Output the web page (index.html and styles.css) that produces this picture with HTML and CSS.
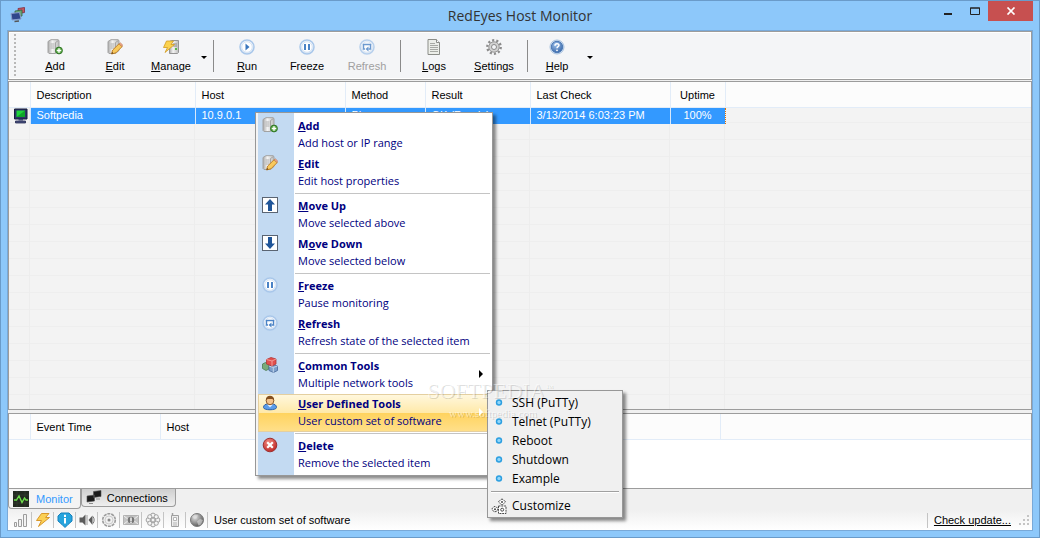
FILE: index.html
```html
<!DOCTYPE html>
<html lang="en">
<head>
    <meta charset="UTF-8">
    <meta name="viewport" content="width=device-width, initial-scale=1.0">
    <title>RedEyes Host Monitor</title>
    <link rel="stylesheet" href="styles.css">
</head>
<body>

<!-- Icon set -->
<svg class="sprite" aria-hidden="true">
    <defs>
        <linearGradient id="g-server" x1="0" x2="1"><stop offset="0" stop-color="#a8a8a8"/><stop offset=".4" stop-color="#f4f4f4"/><stop offset="1" stop-color="#bcbcbc"/></linearGradient>
        <linearGradient id="g-ring" x1="0" x2="0" y1="0" y2="1"><stop offset="0" stop-color="#ffffff"/><stop offset="1" stop-color="#dbe8f6"/></linearGradient>
        <radialGradient id="g-help" cx=".4" cy=".3" r=".8"><stop offset="0" stop-color="#9cc0ea"/><stop offset="1" stop-color="#2f5fa3"/></radialGradient>
        <radialGradient id="g-del" cx=".4" cy=".3" r=".8"><stop offset="0" stop-color="#f08a80"/><stop offset="1" stop-color="#b81c1c"/></radialGradient>
        <radialGradient id="g-globe" cx=".35" cy=".3" r=".8"><stop offset="0" stop-color="#e0e0e0"/><stop offset="1" stop-color="#4c4c4c"/></radialGradient>
    </defs>
    <symbol id="i-server" viewBox="0 0 16 16">
        <path d="M1 2.500L4 .7h7l1 .8v10L8.500 14.500H2L1 13.500z" fill="url(#g-server)" stroke="#a2a2a2"/>
        <path d="M8.500 14V3.500l3-2" fill="none" stroke="#a6a6a6"/>
        <path d="M3.500 5h4M3.500 7h4M3.500 9h4" stroke="#b0b0b0"/>
    </symbol>
    <symbol id="i-add" viewBox="0 0 16 16">
        <use href="#i-server"/>
        <circle cx="12" cy="11.500" r="3.400" fill="#5fae4a" stroke="#2f7326"/>
        <path d="M12 9.300v4.400M9.800 11.500h4.400" stroke="#fff" stroke-width="1.400"/>
    </symbol>
    <symbol id="i-edit" viewBox="0 0 16 16">
        <use href="#i-server"/>
        <path d="M4.500 15l1.200-4L12 4.800 15.200 7.500 9 13.800z" fill="#f8c95c" stroke="#c0812a"/>
        <path d="M12 4.800l1.300-1 2.200 2-.5 1.700z" fill="#f3a88c" stroke="#b97a52" stroke-width=".6"/>
        <path d="M4.500 15l.6-2 1.400 1.300z" fill="#5b3d1c"/>
    </symbol>
    <symbol id="i-manage" viewBox="0 0 16 16">
        <path d="M6.500 2.500l2-1h7v12l-1 1h-8z" fill="url(#g-server)" stroke="#949494"/>
        <path d="M10 5h4M10 7h4" stroke="#888"/><rect x="12" y="9" width="2" height="2" fill="#58b84a"/>
        <path d="M3.500 2h7L8 5.500h3.500L2 13.500l2.500-5H.5z" fill="#fbd24e" stroke="#d09a22" stroke-width=".8"/>
    </symbol>
    <symbol id="i-ring" viewBox="0 0 16 16">
        <circle cx="8" cy="8" r="7" fill="url(#g-ring)" stroke="#a9c7ea" stroke-width="1.500"/>
        <circle cx="8" cy="8" r="5.300" fill="#fff" stroke="#d4e2f3"/>
    </symbol>
    <symbol id="i-run" viewBox="0 0 16 16"><use href="#i-ring"/><path d="M6.500 4.500L10.500 8l-4 3.500z" fill="#3a76bd"/></symbol>
    <symbol id="i-freeze" viewBox="0 0 16 16"><use href="#i-ring"/><path d="M6 5v6M10 5v6" stroke="#4b83c6" stroke-width="2"/></symbol>
    <symbol id="i-refresh" viewBox="0 0 16 16">
        <use href="#i-ring"/>
        <path d="M6 10H4.500V5.500h7V10H9.500" fill="none" stroke="#4b83c6" stroke-width="1.400"/>
        <path d="M9.500 7.500v5L6.500 10z" fill="#4b83c6"/>
    </symbol>
    <symbol id="i-logs" viewBox="0 0 16 16">
        <path d="M2 .5h8.500l3 3v12H2z" fill="#eceee9" stroke="#8b8d88"/>
        <path d="M10.500.5v3h3" fill="#fff" stroke="#8b8d88"/>
        <path d="M4 4.500h5M4 6.500h8M4 8.500h8M4 10.500h8M4 12.500h8" stroke="#a7a9a4"/>
    </symbol>
    <symbol id="i-gear" viewBox="0 0 16 16">
        <circle cx="8" cy="8" r="6.700" fill="none" stroke="#8c8c8c" stroke-width="2.400" stroke-dasharray="2.105 2.105"/>
        <circle cx="8" cy="8" r="5.200" fill="#d2d2d2" stroke="#979797"/>
        <circle cx="8" cy="8" r="2.500" fill="#f4f5f7" stroke="#8a8a8a"/>
    </symbol>
    <symbol id="i-help" viewBox="0 0 16 16">
        <circle cx="8" cy="8" r="7" fill="#dfeaf6" stroke="#a4bfde"/>
        <circle cx="8" cy="8" r="5.700" fill="url(#g-help)" stroke="#4a78b5"/>
        <path d="M6 6.700c0-2.600 4-2.500 4-.4 0 1.400-2 1.300-2 2.900" fill="none" stroke="#fff" stroke-width="1.500"/>
        <circle cx="8" cy="11.300" r=".9" fill="#fff"/>
    </symbol>
    <symbol id="i-up" viewBox="0 0 16 16">
        <rect x=".5" y=".5" width="15" height="15" fill="#fff" stroke="#5a6472"/>
        <path d="M8 2l5 5.500h-3V14H6V7.500H3z" fill="#1f5599"/>
    </symbol>
    <symbol id="i-down" viewBox="0 0 16 16">
        <rect x=".5" y=".5" width="15" height="15" fill="#fff" stroke="#5a6472"/>
        <path d="M8 14l5-5.500h-3V2H6v6.500H3z" fill="#1f5599"/>
    </symbol>
    <symbol id="i-tools" viewBox="0 0 16 16">
        <path d="M.5 7l3-1.500L7 7v5l-3 1.500-3.500-2z" fill="#79ab7b" stroke="#4b7a52" stroke-width=".8"/>
        <path d="M7 9l4-1.500L15.500 9v4.500l-4 2L7 13.500z" fill="#7ea0cb" stroke="#47689a" stroke-width=".8"/>
        <path d="M7 9l4.300 1.500L15.500 9M11.300 10.500v5" fill="none" stroke="#c3d5ec"/>
        <path d="M4.500 2.500L9 .5l5 1.500v5l-4 2-5.500-2z" fill="#e2504e" stroke="#b23636" stroke-width=".8"/>
        <path d="M4.500 2.500L10 4l4-2M10 4v5" fill="none" stroke="#f49a96"/>
    </symbol>
    <symbol id="i-user" viewBox="0 0 16 16">
        <path d="M1.500 12.500c0-2.500 2-3.500 4.500-3.500h4c2.500 0 4.500 1 4.500 3.500 0 3-13 3-13 0z" fill="#5b9cea" stroke="#2d62a8"/>
        <path d="M5 9.500l3 3 3-3z" fill="#dcebfc"/>
        <ellipse cx="8" cy="5.700" rx="3.800" ry="4" fill="#f6c48c" stroke="#8c5a2a"/>
        <path d="M3.800 5.500C3.500-.8 12.500-.8 12.200 5.500L10.500 4h-5z" fill="#85501f"/>
    </symbol>
    <symbol id="i-delete" viewBox="0 0 16 16">
        <circle cx="8" cy="8" r="6.800" fill="url(#g-del)" stroke="#9d3030"/>
        <path d="M5.200 5.200l5.600 5.600M10.800 5.200l-5.600 5.600" stroke="#fff" stroke-width="2.200"/>
    </symbol>
    <symbol id="i-dot" viewBox="0 0 16 16"><circle cx="8" cy="7.500" r="3.200" fill="#2d9fe0"/><circle cx="8" cy="7.500" r="1.700" fill="#8fd6fa"/></symbol>
    <symbol id="i-puzzle" viewBox="0 0 16 16">
        <g fill="#fff" stroke="#4a4a4a" stroke-dasharray="2 .8">
            <path d="M11 .8l1.500 1.400 2 1.300-1.500 2-2 1.500-2-1.500-1.500-2 2-1.300z"/>
            <path d="M.8 11L3 8.500 5.500 9 7 11l-1.500 2.500-2.500.3z"/>
            <path d="M7.500 8h7.500v7.500H7.500z"/>
        </g>
        <circle cx="11.200" cy="11.700" r="1.500" fill="none" stroke="#4a4a4a"/><circle cx="11" cy="4" r="1" fill="#4a4a4a"/><circle cx="4" cy="11.200" r="1" fill="#4a4a4a"/>
    </symbol>
    <symbol id="i-app" viewBox="0 0 16 16">
        <path d="M8 1.500L14.500.5v5l-6 1z" fill="#c55563" stroke="#7d2f3c" stroke-width=".8"/>
        <path d="M5 4l7-1v6L5 10z" fill="#6aa876" stroke="#365f42" stroke-width=".8"/>
        <path d="M1 6.500l8.500-1L11 12l-9 1z" fill="#30468c" stroke="#8a9bc9"/>
        <path d="M4.500 14.500L9 14" stroke="#555" stroke-width="1.500"/>
    </symbol>
    <symbol id="i-host" viewBox="0 0 16 16">
        <path d="M1.500 1h12.500v10H1.500z" fill="#2c3566" stroke="#171d3d"/>
        <path d="M3.500 2.500h8.500v6.500H3.500z" fill="#1fd43a"/>
        <path d="M3.500 9l8.500-6.500V9z" fill="#0da529"/>
        <path d="M5.500 11h4.500v1.500H5.500z" fill="#3c4575"/><path d="M2.500 13h10v2h-10z" fill="#4a5280" stroke="#232a50" stroke-width=".8"/>
    </symbol>
    <symbol id="i-pulse" viewBox="0 0 16 16">
        <rect width="16" height="16" fill="#232a20"/>
        <path d="M0 4h16M0 12h16M4 0v16M12 0v16" stroke="#364034" stroke-width=".6"/>
        <path d="M1 9h2.500L6 5l3 6.500L11.500 7l1.500 2h2" fill="none" stroke="#6fe04c" stroke-width="1.400"/>
    </symbol>
    <symbol id="i-screens" viewBox="0 0 16 16">
        <path d="M7.500 1.500l7.500-1v6l-7.500 1zM1 6l7.500-1v6L1 12z" fill="#1b1b1b" stroke="#555" stroke-width=".6"/>
        <path d="M3 13.500h4M10 9h4" stroke="#8e8e8e"/>
    </symbol>
    <symbol id="i-bars" viewBox="0 0 16 16"><path d="M1.500 10.500h2v4h-2zM5.500 7.500h3v7h-3zM10.500 2.500h3v12h-3z" fill="#f2f2f2" stroke="#9c9c9c"/></symbol>
    <symbol id="i-bolt" viewBox="0 0 16 16"><path d="M6.500 1.500H14l-3.500 4h4L3.500 14.500l3-6H1.500z" fill="#fbd054" stroke="#d8972a"/></symbol>
    <symbol id="i-info" viewBox="0 0 16 16">
        <path d="M4 1h8l3 3v5l-4 3.500-3 3-3-3L1 9V4z" fill="#27a4dd" stroke="#1681bd"/>
        <path d="M8 6v5.500M8 2.800V5" stroke="#fff" stroke-width="2"/>
    </symbol>
    <symbol id="i-sound" viewBox="0 0 16 16">
        <path d="M.5 5.500h3l3-3v11l-3-3h-3z" fill="#5b5b5b"/><path d="M8 3v10" stroke="#9a9a9a"/>
        <path d="M9.500 8l4-4.500V13z" fill="#5b5b5b"/><path d="M14 4.500c1.500 2 1.500 5 0 7" fill="none" stroke="#777"/>
    </symbol>
    <symbol id="i-cog" viewBox="0 0 16 16">
        <circle cx="8" cy="8" r="6.300" fill="#f0f0f0" stroke="#9c9c9c" stroke-width="1.600" stroke-dasharray="3 .9"/>
        <circle cx="8" cy="8" r="4" fill="none" stroke="#cdcdcd"/><circle cx="8" cy="8" r="1.500" fill="#8a8a8a"/>
    </symbol>
    <symbol id="i-mail" viewBox="0 0 16 16">
        <path d="M.5 3.500h15v9H.5z" fill="#c4c4c4" stroke="#b2b2b2"/><path d="M1 4l5 4-5 4M15 4l-5 4 5 4" fill="none" stroke="#efefef"/>
        <circle cx="8" cy="8" r="3.300" fill="#777"/><path d="M8 5.500V9M8 9.600V11" stroke="#fff" stroke-width="1.400"/>
    </symbol>
    <symbol id="i-flower" viewBox="0 0 16 16">
        <g fill="#f4f4f4" stroke="#a0a0a0">
            <circle cx="8" cy="3.500" r="2.400"/><circle cx="8" cy="12.500" r="2.400"/><circle cx="3.500" cy="8" r="2.400"/><circle cx="12.500" cy="8" r="2.400"/>
            <circle cx="4.800" cy="4.800" r="2.100"/><circle cx="11.200" cy="4.800" r="2.100"/><circle cx="4.800" cy="11.200" r="2.100"/><circle cx="11.200" cy="11.200" r="2.100"/>
            <circle cx="8" cy="8" r="2"/>
        </g>
    </symbol>
    <symbol id="i-phone" viewBox="0 0 16 16">
        <path d="M4.500 3.500h7v11h-7z" fill="#eee" stroke="#a0a0a0"/><path d="M5.500 1v2.500" stroke="#a0a0a0" stroke-width="1.500"/>
        <path d="M6.500 5.500h3v3h-3z" fill="#fff" stroke="#b5b5b5"/><path d="M6 11h4M6 13h4" stroke="#b5b5b5"/>
    </symbol>
    <symbol id="i-globe" viewBox="0 0 16 16">
        <circle cx="8" cy="8" r="6.500" fill="url(#g-globe)" stroke="#7b7b7b"/>
        <path d="M3 4.500l3-2 3 1-1.500 3-2.500.5zM8 9.500l3-2.500 3 1-2 4.500-2.500 1z" fill="#e4e4e4" opacity=".55"/>
    </symbol>
</svg>

<div class="window">
    <!-- Title bar -->
    <header class="titlebar">
        <svg class="icon app-icon"><use href="#i-app"/></svg>
        <h1>RedEyes Host Monitor</h1>
        <div class="window-buttons">
            <button type="button" aria-label="Minimize"><svg viewBox="0 0 10 8"><path d="M1 7h8" stroke="#222" stroke-width="2"/></svg></button>
            <button type="button" aria-label="Maximize"><svg viewBox="0 0 10 8"><path d="M.5 1h9v6.500h-9zM0 1h10" fill="none" stroke="#222"/></svg></button>
            <button type="button" class="close" aria-label="Close"><svg viewBox="0 0 10 8"><path d="M1.500.5l7 7M8.500.5l-7 7" stroke="#fff" stroke-width="1.700"/></svg></button>
        </div>
    </header>

    <div class="client">
        <!-- Toolbar -->
        <div class="toolbar">
            <span class="grip"></span>
            <button type="button" class="tool"><svg class="icon"><use href="#i-add"/></svg><span><u>A</u>dd</span></button>
            <button type="button" class="tool"><svg class="icon"><use href="#i-edit"/></svg><span><u>E</u>dit</span></button>
            <button type="button" class="tool narrow"><svg class="icon"><use href="#i-manage"/></svg><span><u>M</u>anage</span></button>
            <button type="button" class="caret" aria-label="Manage menu"></button>
            <span class="divider"></span>
            <button type="button" class="tool"><svg class="icon"><use href="#i-run"/></svg><span><u>R</u>un</span></button>
            <button type="button" class="tool"><svg class="icon"><use href="#i-freeze"/></svg><span>Freeze</span></button>
            <button type="button" class="tool" disabled><svg class="icon"><use href="#i-refresh"/></svg><span>Refresh</span></button>
            <span class="divider"></span>
            <button type="button" class="tool"><svg class="icon"><use href="#i-logs"/></svg><span><u>L</u>ogs</span></button>
            <button type="button" class="tool"><svg class="icon"><use href="#i-gear"/></svg><span><u>S</u>ettings</span></button>
            <span class="divider"></span>
            <button type="button" class="tool narrow"><svg class="icon"><use href="#i-help"/></svg><span><u>H</u>elp</span></button>
            <button type="button" class="caret" aria-label="Help menu"></button>
        </div>

        <!-- Monitored hosts -->
        <div class="pane hosts">
            <table>
                <colgroup>
                    <col class="c-icon"><col class="c-desc"><col class="c-host"><col class="c-method"><col class="c-result"><col class="c-check"><col class="c-uptime"><col>
                </colgroup>
                <thead>
                    <tr><th></th><th>Description</th><th>Host</th><th>Method</th><th>Result</th><th>Last Check</th><th class="center">Uptime</th><th class="rest"></th></tr>
                </thead>
                <tbody>
                    <tr class="selected"><td><svg class="icon"><use href="#i-host"/></svg></td><td>Softpedia</td><td>10.9.0.1</td><td>Ping</td><td>OK (Ready)</td><td>3/13/2014 6:03:23 PM</td><td class="center">100%</td><td class="rest"></td></tr>
                </tbody>
            </table>
        </div>

        <!-- Events of the selected host -->
        <div class="pane events">
            <table>
                <colgroup>
                    <col class="c-icon"><col class="c-time"><col class="c-event-host"><col>
                </colgroup>
                <thead>
                    <tr><th></th><th>Event Time</th><th>Host</th><th class="rest"></th></tr>
                </thead>
            </table>
        </div>

        <div class="tabs">
            <button type="button" class="tab active"><svg class="icon"><use href="#i-pulse"/></svg>Monitor</button>
            <button type="button" class="tab"><svg class="icon"><use href="#i-screens"/></svg>Connections</button>
        </div>

        <footer class="statusbar">
            <span class="cell"><svg class="icon"><use href="#i-bars"/></svg></span>
            <span class="cell"><svg class="icon"><use href="#i-bolt"/></svg></span>
            <span class="cell"><svg class="icon"><use href="#i-info"/></svg></span>
            <span class="cell"><svg class="icon"><use href="#i-sound"/></svg></span>
            <span class="cell"><svg class="icon"><use href="#i-cog"/></svg></span>
            <span class="cell"><svg class="icon"><use href="#i-mail"/></svg></span>
            <span class="cell"><svg class="icon"><use href="#i-flower"/></svg></span>
            <span class="cell"><svg class="icon"><use href="#i-phone"/></svg></span>
            <span class="cell"><svg class="icon"><use href="#i-globe"/></svg></span>
            <span class="hint">User custom set of software</span>
            <a class="update" href="#">Check update...</a>
            <svg class="resize" viewBox="0 0 11 11"><path d="M8 1h2M4 5h2M8 5h2M0 9h2M4 9h2M8 9h2" stroke="#c4c4c4" stroke-width="2"/></svg>
        </footer>
    </div>
</div>

<!-- Context menu -->
<div class="menu">
    <button type="button" class="item"><svg class="icon"><use href="#i-add"/></svg><b><u>A</u>dd</b><span>Add host or IP range</span></button>
    <button type="button" class="item"><svg class="icon"><use href="#i-edit"/></svg><b><u>E</u>dit</b><span>Edit host properties</span></button>
    <div class="line"></div>
    <button type="button" class="item"><svg class="icon"><use href="#i-up"/></svg><b><u>M</u>ove Up</b><span>Move selected above</span></button>
    <button type="button" class="item"><svg class="icon"><use href="#i-down"/></svg><b>M<u>o</u>ve Down</b><span>Move selected below</span></button>
    <div class="line"></div>
    <button type="button" class="item"><svg class="icon"><use href="#i-freeze"/></svg><b><u>F</u>reeze</b><span>Pause monitoring</span></button>
    <button type="button" class="item"><svg class="icon"><use href="#i-refresh"/></svg><b><u>R</u>efresh</b><span>Refresh state of the selected item</span></button>
    <div class="line"></div>
    <button type="button" class="item parent"><svg class="icon"><use href="#i-tools"/></svg><b><u>C</u>ommon Tools</b><span>Multiple network tools</span></button>
    <button type="button" class="item parent hot"><svg class="icon"><use href="#i-user"/></svg><b><u>U</u>ser Defined Tools</b><span>User custom set of software</span></button>
    <div class="line"></div>
    <button type="button" class="item"><svg class="icon"><use href="#i-delete"/></svg><b><u>D</u>elete</b><span>Remove the selected item</span></button>

    <div class="submenu">
        <button type="button"><svg class="icon"><use href="#i-dot"/></svg>SSH (PuTTy)</button>
        <button type="button"><svg class="icon"><use href="#i-dot"/></svg>Telnet (PuTTy)</button>
        <button type="button"><svg class="icon"><use href="#i-dot"/></svg>Reboot</button>
        <button type="button"><svg class="icon"><use href="#i-dot"/></svg>Shutdown</button>
        <button type="button"><svg class="icon"><use href="#i-dot"/></svg>Example</button>
        <hr>
        <button type="button"><svg class="icon"><use href="#i-puzzle"/></svg>Customize</button>
    </div>
</div>

<!-- Watermark -->
<div class="watermark">
    <div>SOFTPEDIA<sup>™</sup></div>
    <small>www.softpedia.com</small>
</div>

</body>
</html>
```
FILE: styles.css
```css
* {
    box-sizing: border-box;
}

body {
    margin: 0;
    font-family: "Liberation Sans", Arial, sans-serif;
    font-size: 11px;
    color: #000;
}

button {
    margin: 0;
    padding: 0;
    border: none;
    background: none;
    font: inherit;
    color: inherit;
}

.sprite {
    position: absolute;
    width: 0;
    height: 0;
}

.icon {
    width: 16px;
    height: 16px;
    flex: none;
}

/* Window frame */
.window {
    min-height: 100vh;
    display: flex;
    flex-direction: column;
    padding: 0 6px 6px;
    border: 1px solid #6a9bc9;
    background-color: #8dc8fa;
}

.titlebar {
    display: flex;
    height: 29px;
}

.app-icon {
    margin: 6px 0 0 3px;
}

.titlebar h1 {
    flex: 1;
    margin: 0;
    padding-left: 80px;
    font-family: "Open Sans", "Noto Sans", sans-serif;
    font-size: 14px;
    font-weight: normal;
    line-height: 29px;
    text-align: center;
    color: #333;
}

.window-buttons {
    display: flex;
    height: 20px;
}

.window-buttons button {
    width: 27px;
    line-height: 0;
}

.window-buttons svg {
    width: 10px;
    height: 8px;
}

.window-buttons .close {
    width: 45px;
    background-color: #c75050;
}

.client {
    flex: 1;
    display: flex;
    flex-direction: column;
    border: 1px solid #79a9d8;
    background-color: #f0f0f0;
}

/* Toolbar */
.toolbar {
    display: flex;
    align-items: center;
    height: 49px;
    padding-left: 5px;
    border: 1px solid #9c9c9c;
    box-shadow: inset 0 0 0 1px #fff;
    background-color: #f4f5f7;
}

.grip {
    width: 2px;
    height: 43px;
    margin-right: 9px;
    background: repeating-linear-gradient(#b8b8b8 0 2px, transparent 2px 4px);
}

.tool {
    display: flex;
    flex-direction: column;
    align-items: center;
    gap: 4px;
    width: 60px;
    line-height: 14px;
}

.tool.narrow {
    width: 52px;
}

.tool:disabled {
    color: #a0a0a0;
}

.tool:disabled .icon {
    opacity: 0.8;
}

.caret {
    width: 13px;
    height: 40px;
}

.caret::before {
    content: "";
    display: block;
    width: 0;
    margin: 4px auto 0;
    border: 3px solid transparent;
    border-top-color: #000;
    border-bottom: none;
}

.divider {
    width: 1px;
    height: 32px;
    margin: 0 3px;
    background-color: #8a8a8a;
}

/* Lists */
.pane {
    border: 1px solid #9c9c9c;
    background-color: #fff;
}

.hosts {
    flex: 1;
    margin-top: 1px;
    background:
        linear-gradient(#ededed, #ededed) 20px 0 / 1px 100% no-repeat,
        linear-gradient(#ededed, #ededed) 185px 0 / 1px 100% no-repeat,
        linear-gradient(#ededed, #ededed) 335px 0 / 1px 100% no-repeat,
        linear-gradient(#ededed, #ededed) 520px 0 / 1px 100% no-repeat,
        linear-gradient(#ededed, #ededed) 660px 0 / 1px 100% no-repeat,
        linear-gradient(#ededed, #ededed) 715px 0 / 1px 100% no-repeat,
        repeating-linear-gradient(#f3f3f3 0 16px, #eeeeee 16px 17px) 0 7px;
}

.events {
    height: 76px;
    margin-top: 3px;
}

.pane table {
    width: 100%;
    table-layout: fixed;
    border-collapse: collapse;
}

.pane th,
.pane td {
    padding: 0 6px;
    text-align: left;
    font-weight: normal;
    white-space: nowrap;
}

.pane th {
    height: 25px;
    padding-top: 2px;
    border-right: 1px solid #e2ecf8;
    border-bottom: 1px solid #e2ecf8;
    background-color: #fcfcfc;
}

.pane th.rest {
    border-right: none;
}

.pane td {
    height: 17px;
    line-height: 15px;
}

.pane .center {
    padding-left: 0;
    padding-right: 0;
    text-align: center;
}

.selected td {
    border-right: 1px solid #d8e8fa;
    border-top: 1px dotted #c07040;
    background-color: #3399ff;
    color: #fff;
}

.selected td:first-child {
    padding: 0 4px;
    border-top: none;
    background: none;
}

.selected td.center {
    border-right: 1px dotted #e07000;
}

.selected td.rest {
    border: none;
    background: none;
}

.selected .icon {
    display: block;
}

.c-icon { width: 21px; }
.c-desc { width: 165px; }
.c-host { width: 150px; }
.c-method { width: 80px; }
.c-result { width: 105px; }
.c-check { width: 140px; }
.c-uptime { width: 55px; }
.c-time { width: 130px; }
.c-event-host { width: 560px; }

/* Tabs */
.tabs {
    display: flex;
    align-items: flex-start;
    height: 21px;
}

.tab {
    display: flex;
    align-items: center;
    gap: 5px;
    height: 18px;
    padding: 0 7px 0 4px;
    border: 1px solid #9c9c9c;
    border-top: none;
    border-radius: 0 0 4px 4px;
    background: linear-gradient(#cfcfcf, #efefef);
}

.tab.active {
    gap: 7px;
    height: 20px;
    background: #f4f4f4;
    color: #3399ff;
}

/* Status bar */
.statusbar {
    display: flex;
    align-items: center;
    height: 20px;
    padding: 0 2px;
    background: linear-gradient(#f0f0f0, #fff);
}

.cell {
    display: flex;
    justify-content: center;
    width: 22px;
    height: 16px;
    border-right: 1px solid #c4c4c4;
}

.hint {
    flex: 1;
    padding-left: 6px;
}

.update {
    padding: 1px 8px 2px 6px;
    border-left: 1px solid #c4c4c4;
    color: #000;
    text-decoration: underline;
}

.resize {
    width: 11px;
    height: 11px;
}

/* Context menu */
.menu {
    position: absolute;
    left: 255px;
    top: 112px;
    width: 238px;
    padding: 3px 2px 1px;
    border: 1px solid #979797;
    background: linear-gradient(to right, #f4f4f4 2px, #c3daf2 2px 38px, #fff 38px);
    box-shadow: 3px 3px 3px rgba(0, 0, 0, 0.45);
    font-family: "Open Sans", "Noto Sans", sans-serif;
    font-size: 11px;
    line-height: 17px;
    color: #000080;
}

.item {
    position: relative;
    display: grid;
    grid-template-columns: 36px 1fr;
    grid-template-rows: 17px 17px;
    align-content: start;
    column-gap: 4px;
    width: 100%;
    height: 38px;
    padding-top: 1px;
    text-align: left;
    white-space: nowrap;
}

.item .icon {
    grid-row: 1 / 3;
    margin-left: 4px;
}

.item.hot {
    background: linear-gradient(#fff8e0, #ffe9a8 50%, #ffd35e 50%, #ffe08c);
    box-shadow: inset 0 0 0 1px #e4cfa0;
}

.item.parent::after {
    content: "";
    position: absolute;
    right: 7px;
    top: 14px;
    border: 4px solid transparent;
    border-left-color: #000;
    border-right: none;
}

.item.hot::after {
    border-left-color: #fff;
}

.line {
    height: 3px;
    margin: 1px 0 0 37px;
    border-top: 1px solid #c4c4c4;
}

/* Submenu */
.submenu {
    position: absolute;
    left: 231px;
    top: 277px;
    width: 136px;
    padding: 2px 3px;
    border: 1px solid #979797;
    background-color: #f0f0f0;
    box-shadow: 3px 3px 3px rgba(0, 0, 0, 0.45);
    font-size: 12px;
    color: #000;
}

.submenu button {
    display: flex;
    align-items: center;
    gap: 5px;
    width: 100%;
    height: 19px;
    white-space: nowrap;
}

.submenu hr {
    margin: 3px 0;
    border: none;
    border-top: 1px solid #a0a0a0;
    border-bottom: 1px solid #fff;
}

/* Watermark */
.watermark {
    position: absolute;
    left: 427px;
    top: 380px;
    font-family: "Liberation Serif", serif;
    font-size: 22px;
    line-height: 22px;
    color: rgba(255, 255, 255, 0.5);
    text-shadow: 1px 1px 0 rgba(0, 0, 0, 0.15);
    pointer-events: none;
}

.watermark sup {
    font-size: 8px;
    line-height: 8px;
}

.watermark small {
    display: block;
    padding-left: 22px;
    font-size: 11px;
}
```
